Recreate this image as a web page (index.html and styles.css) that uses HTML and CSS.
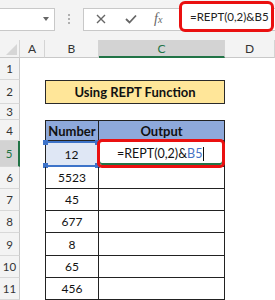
FILE: index.html
```html
<!DOCTYPE html>
<html lang="en">
<head>
  <meta charset="UTF-8">
  <title>REPT Function</title>
  <link rel="stylesheet" href="styles.css">
</head>
<body>
  <div class="app">
    <!-- barra da formula -->
    <div class="topbar">
      <div class="namebox"><span class="caret"></span></div>
      <div class="dots"><span></span><span></span><span></span></div>
      <div class="fbar">
        <div class="ficons">
          <svg width="10" height="10" viewBox="0 0 10 10"><path d="M1 1 L9 9 M9 1 L1 9" stroke="#666" stroke-width="1.4" fill="none"/></svg>
          <svg width="12" height="10" viewBox="0 0 12 10"><path d="M1 5 L4.5 8.5 L11 1.5" stroke="#666" stroke-width="1.8" fill="none"/></svg>
          <span class="fx">f<i>x</i></span>
        </div>
        <div class="finput">=REPT(0,2)&amp;B5</div>
      </div>
    </div>

    <!-- planilha -->
    <div class="sheet">
      <div class="corner"></div>
      <div class="colhead">A</div>
      <div class="colhead">B</div>
      <div class="colhead active">C</div>
      <div class="colhead">D</div>

      <div class="rowhead">1</div><div class="blank span4"></div>

      <div class="rowhead">2</div><div class="blank"></div>
      <div class="title">Using REPT Function</div><div class="blank"></div>

      <div class="rowhead">3</div><div class="blank span4"></div>

      <div class="rowhead">4</div><div class="blank"></div>
      <div class="cell th first top">Number</div><div class="cell th top">Output</div><div class="blank"></div>

      <div class="rowhead active">5</div><div class="blank"></div>
      <div class="cell first sel">12<i class="h tl"></i><i class="h tr"></i><i class="h bl"></i><i class="h br"></i></div>
      <div class="cell edit"><span class="etext">=REPT(0,2)&amp;<b>B5</b><span class="cursor"></span></span><div class="mark"></div></div>
      <div class="blank"></div>

      <div class="rowhead">6</div><div class="blank"></div><div class="cell first">5523</div><div class="cell"></div><div class="blank"></div>
      <div class="rowhead">7</div><div class="blank"></div><div class="cell first">45</div><div class="cell"></div><div class="blank"></div>
      <div class="rowhead">8</div><div class="blank"></div><div class="cell first">677</div><div class="cell"></div><div class="blank"></div>
      <div class="rowhead">9</div><div class="blank"></div><div class="cell first">8</div><div class="cell"></div><div class="blank"></div>
      <div class="rowhead">10</div><div class="blank"></div><div class="cell first">65</div><div class="cell"></div><div class="blank"></div>
      <div class="rowhead">11</div><div class="blank"></div><div class="cell first">456</div><div class="cell"></div><div class="blank"></div>
    </div>
  </div>
</body>
</html>
```

FILE: styles.css
```css
* {
  box-sizing: border-box;
}
body {
  margin: 0;
  font-family: Lato, "Open Sans", sans-serif;
  background: #fff;
}
.app {
  width: 275px;
  height: 300px;
  overflow: hidden;
}
.topbar {
  height: 40px;
  background: #f3f3f3;
  display: flex;
  align-items: center;
  padding-bottom: 2px;
}
.namebox {
  width: 55px;
  height: 23px;
  background: #fff;
  border: 1px solid #c8c8c8;
  border-left: none;
  display: flex;
  justify-content: flex-end;
  align-items: center;
  padding-right: 5px;
}
.caret {
  width: 0;
  height: 0;
  border-left: 3.5px solid transparent;
  border-right: 3.5px solid transparent;
  border-top: 4px solid #666;
}
.dots {
  width: 28px;
  display: flex;
  flex-direction: column;
  align-items: center;
  gap: 2px;
}
.dots span {
  width: 2px;
  height: 2px;
  background: #b0b0b0;
}
.fbar {
  flex: 1;
  height: 23px;
  background: #fff;
  border: 1px solid #c8c8c8;
  border-right: none;
  display: flex;
  align-items: center;
}
.ficons {
  width: 95px;
  display: flex;
  align-items: center;
  gap: 19px;
  padding-left: 12px;
}
.fx {
  font-family: "Liberation Serif", serif;
  font-style: italic;
  font-size: 14px;
  color: #666;
  margin-left: -2px;
}
.fx i {
  font-size: 10px;
}
.finput {
  position: relative;
  width: 95px;
  height: 31px;
  margin-top: -6px;
  border: 3px solid #ea1010;
  border-radius: 6px;
  background: #fff;
  font-size: 11.5px;
  color: #222;
  display: flex;
  align-items: center;
  padding-left: 8px;
  white-space: nowrap;
}
.sheet {
  display: grid;
  grid-template-columns: 20px 25px 54px 126px 1fr;
  grid-template-rows: 18px 22px 24px 16px 21px 26px 22px 22px 22px 23px 22px 22px;
  font-size: 12px;
  color: #111;
}
.corner {
  background: #f3f3f3;
  border-right: 1px solid #d4d4d4;
  border-bottom: 1px solid #c8c8c8;
  position: relative;
}
.corner::after {
  content: "";
  position: absolute;
  right: 2px;
  bottom: 2px;
  border-left: 11px solid transparent;
  border-bottom: 11px solid #d6d6d6;
}
.colhead {
  background: #f3f3f3;
  border-right: 1px solid #d4d4d4;
  border-bottom: 1px solid #c8c8c8;
  display: flex;
  align-items: center;
  justify-content: center;
  font-size: 12px;
  color: #333;
}
.colhead.active {
  background: #d3d3d3;
  border-bottom: 2px solid #217346;
  color: #217346;
}
.rowhead {
  background: #f3f3f3;
  border-right: 1px solid #c8c8c8;
  border-bottom: 1px solid #d8d8d8;
  display: flex;
  align-items: center;
  justify-content: center;
  font-size: 11.5px;
  color: #333;
}
.rowhead.active {
  background: #d3d3d3;
  border-right: 2px solid #217346;
  color: #217346;
}
.span4 {
  grid-column: span 4;
}
.title {
  grid-column: span 2;
  background: #ffe699;
  border: 1px solid #2a2a2a;
  display: flex;
  align-items: center;
  justify-content: center;
  font-weight: bold;
  font-size: 13px;
}
.cell {
  position: relative;
  border-right: 1px solid #222;
  border-bottom: 1px solid #222;
  display: flex;
  align-items: center;
  justify-content: center;
}
.cell.first {
  border-left: 1px solid #222;
}
.cell.top {
  border-top: 1px solid #222;
}
.th {
  background: #8ea9db;
  font-weight: bold;
  font-size: 13px;
}
.sel {
  background: #dfe7f5;
  border: 2px solid #3d73c9;
}
.h {
  position: absolute;
  width: 5px;
  height: 5px;
  background: #3d73c9;
}
.tl { left: -3px; top: -3px; }
.tr { right: -3px; top: -3px; }
.bl { left: -3px; bottom: -3px; }
.br { right: -3px; bottom: -3px; }
.edit {
  justify-content: flex-start;
}
.etext {
  padding-left: 18px;
  font-size: 12.5px;
  display: flex;
  align-items: center;
}
.etext b {
  font-weight: normal;
  color: #4472c4;
}
.cursor {
  width: 1px;
  height: 14px;
  background: #111;
  margin-left: 1px;
}
.mark {
  position: absolute;
  left: -2px;
  right: -1px;
  top: -2px;
  bottom: -2px;
  border: 3px solid #ea1010;
  border-radius: 5px;
  box-shadow: inset 0 -2px 0 #217346;
}
```
